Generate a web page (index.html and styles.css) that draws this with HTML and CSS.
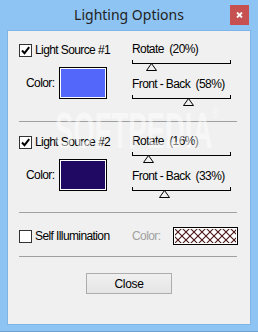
FILE: index.html
```html
<!DOCTYPE html>
<html>
<head>
	<title>Lighting Options</title>
	<meta charset="utf-8">
	<link rel="stylesheet" href="styles.css">
</head>
<body>
<div class="window">
	<div class="titlebar">
		<span></span>
		<h1 class="title">Lighting Options</h1>
		<button class="close-x">
			<svg width="7" height="6" viewBox="0 0 7 6"><path d="M1 0.5 L6 5.5 M6 0.5 L1 5.5" stroke="#fff" stroke-width="1.8"/></svg>
		</button>
	</div>

	<div class="client">
		<section class="source">
			<div class="left">
				<label class="check">
					<span class="box"><svg width="11" height="11" viewBox="0 0 11 11"><polyline points="2,5.5 4.5,8.2 9.2,2.2" fill="none" stroke="#000" stroke-width="2"/></svg></span>
					Light Source #1
				</label>
				<div class="color-row">
					<span class="color-label">Color:</span>
					<span class="swatch" style="background:#5367fb"></span>
				</div>
			</div>
			<div class="sliders">
				<div class="slider">
					<div class="slider-label">Rotate&nbsp; (20%)</div>
					<div class="track">
						<span class="thumb" style="left:20%"><svg width="11" height="8" viewBox="0 0 11 8"><polygon points="5.5,0.5 10.5,7.5 0.5,7.5" fill="#f0f0f0" stroke="#000"/></svg></span>
					</div>
				</div>
				<div class="slider">
					<div class="slider-label">Front - Back&nbsp; (58%)</div>
					<div class="track">
						<span class="thumb" style="left:58%"><svg width="11" height="8" viewBox="0 0 11 8"><polygon points="5.5,0.5 10.5,7.5 0.5,7.5" fill="#f0f0f0" stroke="#000"/></svg></span>
					</div>
				</div>
			</div>
		</section>

		<hr class="sep">

		<section class="source source-2">
			<div class="left">
				<label class="check">
					<span class="box"><svg width="11" height="11" viewBox="0 0 11 11"><polyline points="2,5.5 4.5,8.2 9.2,2.2" fill="none" stroke="#000" stroke-width="2"/></svg></span>
					Light Source #2
				</label>
				<div class="color-row">
					<span class="color-label">Color:</span>
					<span class="swatch" style="background:#1f0962"></span>
				</div>
			</div>
			<div class="sliders">
				<div class="slider">
					<div class="slider-label">Rotate&nbsp; (16%)</div>
					<div class="track">
						<span class="thumb" style="left:16%"><svg width="11" height="8" viewBox="0 0 11 8"><polygon points="5.5,0.5 10.5,7.5 0.5,7.5" fill="#f0f0f0" stroke="#000"/></svg></span>
					</div>
				</div>
				<div class="slider">
					<div class="slider-label">Front - Back&nbsp; (33%)</div>
					<div class="track">
						<span class="thumb" style="left:33%"><svg width="11" height="8" viewBox="0 0 11 8"><polygon points="5.5,0.5 10.5,7.5 0.5,7.5" fill="#f0f0f0" stroke="#000"/></svg></span>
					</div>
				</div>
			</div>
		</section>

		<hr class="sep">

		<div class="self">
			<label class="check self-check">
				<span class="box"></span>
				Self Illumination
			</label>
			<span class="self-label">Color:</span>
			<span class="hatch">
				<svg width="61" height="14">
					<defs>
						<pattern id="lattice" width="8" height="8" patternUnits="userSpaceOnUse" x="-1" y="-1">
							<path d="M0 0 L8 8 M8 0 L0 8" stroke="#4a1212" stroke-width="1.1"/>
						</pattern>
					</defs>
					<rect width="61" height="14" fill="url(#lattice)"/>
				</svg>
			</span>
		</div>

		<hr class="sep">

		<div class="buttons">
			<button class="btn">Close</button>
		</div>
	</div>

	<div class="watermark">SOFTPEDIA<sup>®</sup></div>
</div>
</body>
</html>
```

FILE: styles.css
```css
* {
	margin: 0;
	padding: 0;
	box-sizing: border-box;
}

body {
	width: 258px;
	height: 332px;
	overflow: hidden;
	font-family: "Liberation Sans", Arial, sans-serif;
	font-size: 12px;
	letter-spacing: -0.6px;
	color: #000;
}

.window {
	position: relative;
	width: 258px;
	height: 332px;
	background-color: #8dc4f3;
	border-bottom: 1px solid #6f9fd0;
	display: flex;
	flex-direction: column;
}

.titlebar {
	height: 30px;
	display: grid;
	grid-template-columns: 1fr auto 1fr;
}

.title {
	font-family: "Noto Sans", "Open Sans", sans-serif;
	font-size: 14px;
	font-weight: normal;
	letter-spacing: 0;
	line-height: 30px;
	color: #222;
}

.close-x {
	justify-self: end;
	width: 19px;
	height: 20px;
	margin: 5px 9px 0 0;
	border: 0;
	background-color: #c75050;
	display: flex;
	align-items: center;
	justify-content: center;
}

.close-x svg {
	display: block;
}

.client {
	flex: 1;
	margin: 0 7px 6px;
	border: 1px solid #7eb4e6;
	background-color: #f0f0f0;
}

/* light source blocks */
.source {
	display: flex;
	padding: 11px 0 14px;
}

.source-2 {
	padding: 12px 0 13px;
}

.left {
	width: 124px;
	padding-left: 11px;
	margin-top: 1px;
}

.check {
	display: flex;
	align-items: center;
	height: 14px;
	line-height: 14px;
	white-space: nowrap;
}

.box {
	width: 13px;
	height: 13px;
	margin-right: 3px;
	border: 1px solid #333;
	background-color: #fff;
	display: flex;
}

.box svg {
	display: block;
}

.color-row {
	display: flex;
	align-items: center;
	margin-top: 10px;
	padding-left: 7px;
}

.color-label {
	width: 33px;
}

.swatch {
	width: 48px;
	height: 32px;
	border: 1px solid #000;
	box-shadow: inset 0 0 0 1px #fff;
}

.sliders {
	width: 99px;
}

.slider + .slider {
	margin-top: 13px;
}

.slider-label {
	line-height: 14px;
	white-space: nowrap;
}

.track {
	position: relative;
	height: 4px;
	margin: 4px 0 8px;
	border: 1px solid #000;
	border-top: 0;
}

.thumb {
	position: absolute;
	top: 100%;
	width: 11px;
	height: 8px;
	margin-left: -6px;
}

.thumb svg {
	display: block;
}

.sep {
	height: 0;
	margin: 0 13px 0 11px;
	border: 0;
	border-top: 1px solid #a0a0a0;
}

/* self illumination row */
.self {
	display: flex;
	align-items: center;
	padding: 14px 0 11px 11px;
}

.self-check {
	width: 113px;
}

.self-label {
	width: 41px;
	color: #a0a0a0;
}

.hatch {
	width: 65px;
	height: 18px;
	border: 1px solid #000;
	padding: 1px;
	background-color: #fff;
}

.hatch svg {
	display: block;
}

.buttons {
	display: flex;
	justify-content: center;
	padding-top: 16px;
}

.btn {
	width: 86px;
	height: 21px;
	border: 1px solid #adadad;
	background: linear-gradient(#f0f0f0, #e5e5e5);
	font-family: inherit;
	font-size: 12px;
	letter-spacing: -0.3px;
	color: #000;
}

.watermark {
	position: absolute;
	left: 55px;
	top: 106px;
	font-family: "Liberation Sans", Arial, sans-serif;
	font-weight: bold;
	font-size: 50px;
	letter-spacing: 0;
	line-height: 1;
	color: rgba(255, 255, 255, 0.5);
	transform: scaleX(0.55);
	transform-origin: left top;
	pointer-events: none;
	white-space: nowrap;
}

.watermark sup {
	font-size: 14px;
	vertical-align: top;
}
```
